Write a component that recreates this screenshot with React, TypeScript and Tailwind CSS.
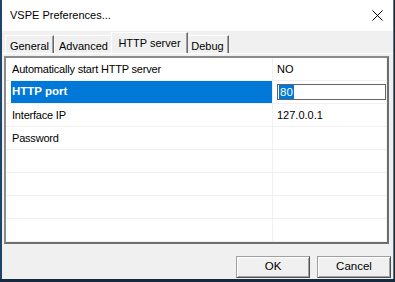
import React from "react";

const font = { fontFamily: '"Liberation Sans", Arial, sans-serif' };

function Tab({ label, w, selected }: { label: string; w: string; selected?: boolean }) {
  if (selected) {
    return (
      <div
        className={`${w} h-[21px] -mx-[2px] relative z-10 bg-[#f0f0f0] border-l border-t border-white border-r border-r-[#696969] shadow-[inset_-1px_0_#a0a0a0] flex items-start justify-center pt-[2px] text-[11px] text-black`}
      >
        {label}
      </div>
    );
  }
  return (
    <div
      className={`${w} h-[18px] bg-[#f0f0f0] border-l border-t border-white border-r border-r-[#696969] shadow-[inset_-1px_0_#a0a0a0] flex items-start justify-center pt-[2px] text-[11px] text-black`}
    >
      {label}
    </div>
  );
}

function Row({
  name,
  value,
  selected,
  edit,
}: {
  name?: string;
  value?: string;
  selected?: boolean;
  edit?: boolean;
}) {
  return (
    <div className="flex h-[23px] border-b border-[#f0f0f0] bg-white">
      <div className="w-[267px] border-r border-[#f0f0f0] flex items-stretch">
        {selected ? (
          <div className="ml-[5px] flex-1 bg-[#0078d7] text-white font-bold text-[11.5px] flex items-center pl-[1px]">
            {name}
          </div>
        ) : (
          <div className="pl-[6px] flex items-center text-[11px] tracking-[-0.2px] text-black">{name}</div>
        )}
      </div>
      <div className="w-[114px] border-r border-[#f0f0f0] flex items-center">
        {edit ? (
          <div className="ml-[4px] w-[110px] h-[16px] border border-[#646464] bg-white flex items-center pl-[1px]">
            <span className="bg-[#0078d7] text-white text-[11.5px] leading-[14px] px-[1px]">{value}</span>
          </div>
        ) : (
          <div className="pl-[4px] text-[11px] text-black">{value}</div>
        )}
      </div>
    </div>
  );
}

export default function App() {
  return (
    <div className="w-[395px] h-[282px] bg-[#16293d] overflow-hidden" style={font}>
      <div className="flex h-[279px]">
        <div className="w-[2px] bg-[#1d4569]" />
        <div className="w-[392px] h-[279px] bg-[#f0f0f0] border-r border-[#6e6e6e] flex flex-col">
          {/* Title bar */}
          <div className="h-[31px] bg-white flex items-center justify-between pl-[8px] pr-[10px]">
            <span className="text-[11px] text-black">VSPE Preferences...</span>
            <svg width="11" height="11" viewBox="0 0 11 11" className="mt-[-1px]">
              <path d="M0.5 0.5 L10.5 10.5 M10.5 0.5 L0.5 10.5" stroke="#000" strokeWidth="1" fill="none" />
            </svg>
          </div>
          {/* Tabs */}
          <div className="h-[22px] flex items-end pl-[3px]">
            <Tab label="General" w="w-[49px]" />
            <Tab label="Advanced" w="w-[59px]" />
            <Tab label="HTTP server" w="w-[77px]" selected />
            <Tab label="Debug" w="w-[43px]" />
          </div>
          {/* Panel */}
          <div className="border-t border-white pt-[2px] pl-[2px]">
            <div className="w-[385px] border-2 border-t-[#8c8c8c] border-l-[#8c8c8c] border-r-[#6e6e6e] border-b-[#6e6e6e] bg-white">
              <Row name="Automatically start HTTP server" value="NO" />
              <Row name="HTTP port" value="80" selected edit />
              <Row name="Interface IP" value="127.0.0.1" />
              <Row name="Password" />
              <Row />
              <Row />
              <Row />
              <Row />
            </div>
          </div>
          {/* Buttons */}
          <div className="flex justify-end gap-[7px] pr-[2px] mt-[12px]">
            <button className="w-[74px] h-[22px] bg-[#f0f0f0] border border-t-[#a0a0a0] border-l-[#a0a0a0] border-r-[#505050] border-b-[#505050] shadow-[inset_1px_1px_#ffffff,inset_-1px_-1px_#a0a0a0] text-[11.5px] text-black">
              OK
            </button>
            <button className="w-[74px] h-[22px] bg-[#f0f0f0] border border-t-[#a0a0a0] border-l-[#a0a0a0] border-r-[#505050] border-b-[#505050] shadow-[inset_1px_1px_#ffffff,inset_-1px_-1px_#a0a0a0] text-[11.5px] text-black">
              Cancel
            </button>
          </div>
        </div>
      </div>
    </div>
  );
}
